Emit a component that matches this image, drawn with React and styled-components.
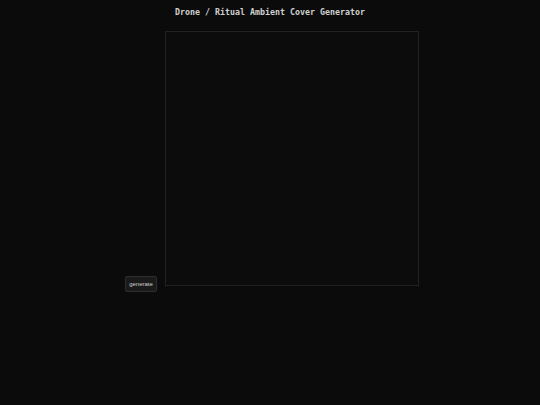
import React from 'react';
import styled, { createGlobalStyle } from 'styled-components';

const Global = createGlobalStyle`
  html, body {
    margin: 0;
    padding: 0;
    background: #0b0b0b;
    height: 100%;
  }
  #root {
    min-height: 100%;
  }
`

const Page = styled.div`
  width: 540px;
  height: 405px;
  background: #0b0b0b;
  display: flex;
  flex-direction: column;
  align-items: center;
`

const Title = styled.h1`
  margin: 7px 0 0;
  font-family: "DejaVu Sans Mono", "Liberation Mono", monospace;
  font-weight: bold;
  font-size: 8.3px;
  line-height: 10px;
  color: #d0d0d0;
  letter-spacing: 0;
`

const Stage = styled.div`
  margin-top: 14px;
  display: flex;
  align-items: flex-end;
  gap: 8px;
  padding-left: 4px;
`

const Generate = styled.button`
  width: 32px;
  height: 16px;
  margin-bottom: -6px;
  padding: 0;
  background: #1a1a1a;
  border: 1px solid #2e2e2e;
  border-radius: 2px;
  color: #cfcfcf;
  font-family: "Liberation Sans", Arial, sans-serif;
  font-size: 6px;
  cursor: pointer;
`

const Cover = styled.div`
  width: 252px;
  height: 253px;
  background: #0c0c0c;
  border: 1px solid #222;
`

export default function App() {
  return (
    <>
      <Global />
      <Page>
        <Title>Drone / Ritual Ambient Cover Generator</Title>
        <Stage>
          <Generate>generate</Generate>
          <Cover />
        </Stage>
      </Page>
    </>
  );
}
